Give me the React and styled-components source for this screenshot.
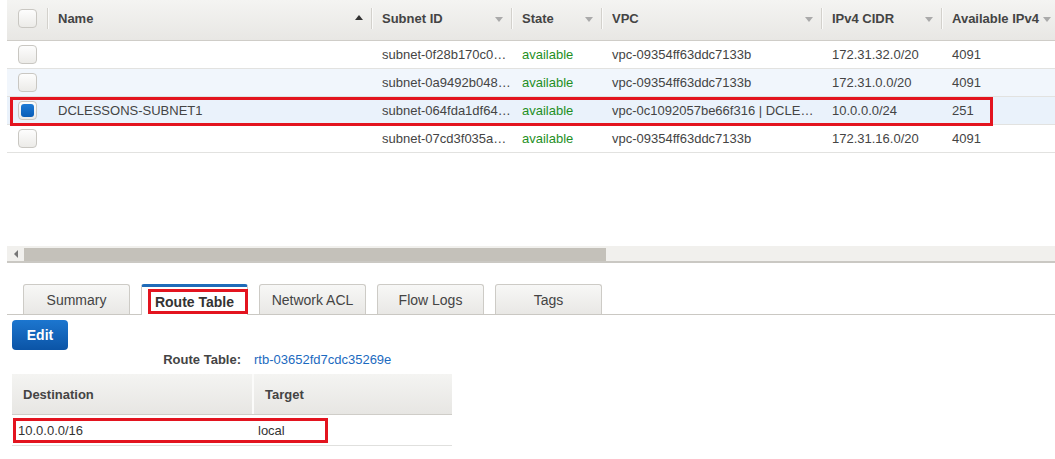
import React from "react";
import styled, { createGlobalStyle, css } from "styled-components";

const Global = createGlobalStyle`
  html, body { margin: 0; padding: 0; background: #fff; }
  body { font-family: "Liberation Sans", Arial, sans-serif; color: #444; }
  * { box-sizing: border-box; }
`;

const COLS = "40px 324px 140px 90px 220px 120px 118px";

const Page = styled.div`
  width: 1055px;
  height: 459px;
  overflow: hidden;
  padding-left: 7px;
`;

const GridWrap = styled.div`
  position: relative;
  height: 246px;
  width: 1100px;
`;

const HeaderRow = styled.div`
  display: grid;
  grid-template-columns: ${COLS};
  height: 41px;
  background: linear-gradient(#f4f4f2, #e8e7e4);
  border-bottom: 1px solid #cfcdc8;
`;

const HeadCell = styled.div`
  position: relative;
  display: flex;
  align-items: center;
  padding: 0 ${(p) => (p.$tight ? 17 : 11)}px 3px 11px;
  font-size: 13px;
  font-weight: bold;
  color: #444;
  white-space: nowrap;
  overflow: hidden;
  &::before {
    content: "";
    position: absolute;
    left: 0;
    top: 8px;
    bottom: 11px;
    width: 1px;
    background: #d3d1cc;
    box-shadow: 1px 0 0 #fafaf9;
  }
`;

const HeadLabel = styled.span`
  flex: 1;
  min-width: 0;
  overflow: hidden;
  white-space: nowrap;
  text-overflow: clip;
`;

const Arrow = styled.span`
  position: absolute;
  right: 8px;
  width: 0;
  height: 0;
  border-left: 4px solid transparent;
  border-right: 4px solid transparent;
  ${(p) =>
    p.$up
      ? css`
          top: 15px;
          border-bottom: 5px solid #333;
        `
      : css`
          top: 17px;
          border-top: 5px solid #aaa;
        `}
`;

const Row = styled.div`
  display: grid;
  grid-template-columns: ${COLS};
  height: 28px;
  border-bottom: 1px solid #e2e2e0;
  background: ${(p) => p.$bg || "#fff"};
`;

const Cell = styled.div`
  display: flex;
  align-items: center;
  padding-left: 11px;
  font-size: 13px;
  color: ${(p) => (p.$green ? "#1f8f1f" : "#444")};
  white-space: nowrap;
  overflow: hidden;
`;

const CheckCell = styled.div`
  display: flex;
  align-items: center;
  padding-left: 11px;
  padding-bottom: ${(p) => (p.$head ? 3 : 0)}px;
`;

const Check = styled.span`
  display: inline-flex;
  align-items: center;
  justify-content: center;
  width: 19px;
  height: 19px;
  border: 1px solid #c9c7c2;
  border-radius: 4px;
  background: linear-gradient(#fdfdfd, #ecebe8);
  ${(p) =>
    p.$checked &&
    css`
      &::after {
        content: "";
        width: 13px;
        height: 13px;
        border-radius: 3px;
        background: linear-gradient(#1d7ad6, #0a5db6);
      }
    `}
`;

const RedBox = styled.div`
  position: absolute;
  left: ${(p) => p.$l}px;
  top: ${(p) => p.$t}px;
  width: ${(p) => p.$w}px;
  height: ${(p) => p.$h}px;
  border: 3px solid #e3141f;
  pointer-events: none;
`;

const Scrollbar = styled.div`
  display: flex;
  align-items: center;
  height: 17px;
  background: #f1f0ed;
  border-bottom: 2px solid #cac8c3;
  padding: 2px 0 1px 0;
`;

const ScrollArrow = styled.span`
  width: 17px;
  display: flex;
  justify-content: center;
  &::before {
    content: "";
    border-top: 4px solid transparent;
    border-bottom: 4px solid transparent;
    border-right: 4px solid #777;
  }
`;

const Thumb = styled.div`
  height: 13px;
  background: #c4c1ba;
`;

const Details = styled.div`
  padding-top: 21px;
`;

const TabBar = styled.div`
  display: flex;
  gap: 11px;
  padding-left: 16px;
  border-bottom: 1px solid #cac8c3;
  height: 31px;
`;

const Tab = styled.div`
  width: 107px;
  height: 30px;
  display: flex;
  align-items: center;
  justify-content: center;
  font-size: 14px;
  border: 1px solid #cdcbc6;
  border-bottom: none;
  border-radius: 3px 3px 0 0;
  background: linear-gradient(#f7f7f6, #e9e8e5);
  color: #444;
  ${(p) =>
    p.$active &&
    css`
      background: #fff;
      border-top: 3px solid #1f6bb8;
      height: 31px;
      font-weight: bold;
      color: #333;
      padding-top: 1px;
    `}
`;

const Content = styled.div`
  position: relative;
  padding: 5px 0 0 5px;
`;

const EditButton = styled.button`
  display: block;
  width: 56px;
  height: 30px;
  border: none;
  border-radius: 4px;
  background: linear-gradient(#1c76cf, #0b54a6);
  color: #fff;
  font-family: "Liberation Sans", Arial, sans-serif;
  font-size: 14px;
  font-weight: bold;
  padding: 0;
`;

const InfoRow = styled.div`
  display: flex;
  gap: 13px;
  height: 16px;
  align-items: center;
  margin-top: 1px;
  font-size: 13px;
`;

const InfoLabel = styled.span`
  width: 229px;
  text-align: right;
  font-weight: bold;
  color: #444;
`;

const InfoLink = styled.a`
  color: #1b6ac0;
  text-decoration: none;
`;

const RouteTable = styled.div`
  width: 440px;
  margin-top: 7px;
`;

const RTHead = styled.div`
  display: grid;
  grid-template-columns: 240px 200px;
  height: 41px;
  background: linear-gradient(#f4f4f2, #e7e6e3);
  border-bottom: 1px solid #cfcdc8;
`;

const RTHeadCell = styled.div`
  display: flex;
  align-items: center;
  padding-left: 11px;
  font-size: 13px;
  font-weight: bold;
  color: #444;
  ${(p) => p.$sep && css`border-left: 2px solid #fbfbfa;`}
`;

const RTRow = styled.div`
  display: grid;
  grid-template-columns: 240px 200px;
  height: 31px;
  border-bottom: 1px solid #e0e0de;
`;

const RTCell = styled.div`
  display: flex;
  align-items: center;
  padding-left: 6px;
  font-size: 13px;
  color: #333;
`;

const subnets = [
  { name: "", id: "subnet-0f28b170c0…", vpc: "vpc-09354ff63ddc7133b", cidr: "172.31.32.0/20", avail: "4091" },
  { name: "", id: "subnet-0a9492b048…", vpc: "vpc-09354ff63ddc7133b", cidr: "172.31.0.0/20", avail: "4091", bg: "#f1f6fc" },
  { name: "DCLESSONS-SUBNET1", id: "subnet-064fda1df64…", vpc: "vpc-0c1092057be66f316 | DCLE…", cidr: "10.0.0.0/24", avail: "251", bg: "#eaf2fb", checked: true },
  { name: "", id: "subnet-07cd3f035a…", vpc: "vpc-09354ff63ddc7133b", cidr: "172.31.16.0/20", avail: "4091" },
];

const headers = [
  { label: "Name", up: true },
  { label: "Subnet ID" },
  { label: "State" },
  { label: "VPC" },
  { label: "IPv4 CIDR" },
  { label: "Available IPv4 Addresses", tight: true },
];

const tabs = ["Summary", "Route Table", "Network ACL", "Flow Logs", "Tags"];

export default function App() {
  return (
    <Page>
      <Global />
      <GridWrap>
        <HeaderRow>
          <CheckCell $head>
            <Check />
          </CheckCell>
          {headers.map((h) => (
            <HeadCell key={h.label} $tight={h.tight}>
              <HeadLabel>{h.label}</HeadLabel>
              <Arrow $up={h.up} />
            </HeadCell>
          ))}
        </HeaderRow>
        {subnets.map((s, i) => (
          <Row key={i} $bg={s.bg}>
            <CheckCell>
              <Check $checked={s.checked} />
            </CheckCell>
            <Cell>{s.name}</Cell>
            <Cell>{s.id}</Cell>
            <Cell $green>available</Cell>
            <Cell>{s.vpc}</Cell>
            <Cell>{s.cidr}</Cell>
            <Cell>{s.avail}</Cell>
          </Row>
        ))}
        <RedBox $l={3} $t={97} $w={983} $h={29} />
      </GridWrap>
      <Scrollbar>
        <ScrollArrow />
        <Thumb style={{ width: 582 }} />
      </Scrollbar>
      <Details>
        <TabBar>
          {tabs.map((t) => (
            <Tab key={t} $active={t === "Route Table"}>
              {t}
            </Tab>
          ))}
        </TabBar>
        <Content>
          <RedBox $l={141} $t={-26} $w={100} $h={25} />
          <EditButton>Edit</EditButton>
          <InfoRow>
            <InfoLabel>Route Table:</InfoLabel>
            <InfoLink href="#">rtb-03652fd7cdc35269e</InfoLink>
          </InfoRow>
          <RouteTable>
            <RTHead>
              <RTHeadCell>Destination</RTHeadCell>
              <RTHeadCell $sep>Target</RTHeadCell>
            </RTHead>
            <RTRow>
              <RTCell>10.0.0.0/16</RTCell>
              <RTCell>local</RTCell>
            </RTRow>
          </RouteTable>
          <RedBox $l={6} $t={103} $w={315} $h={25} />
        </Content>
      </Details>
    </Page>
  );
}
